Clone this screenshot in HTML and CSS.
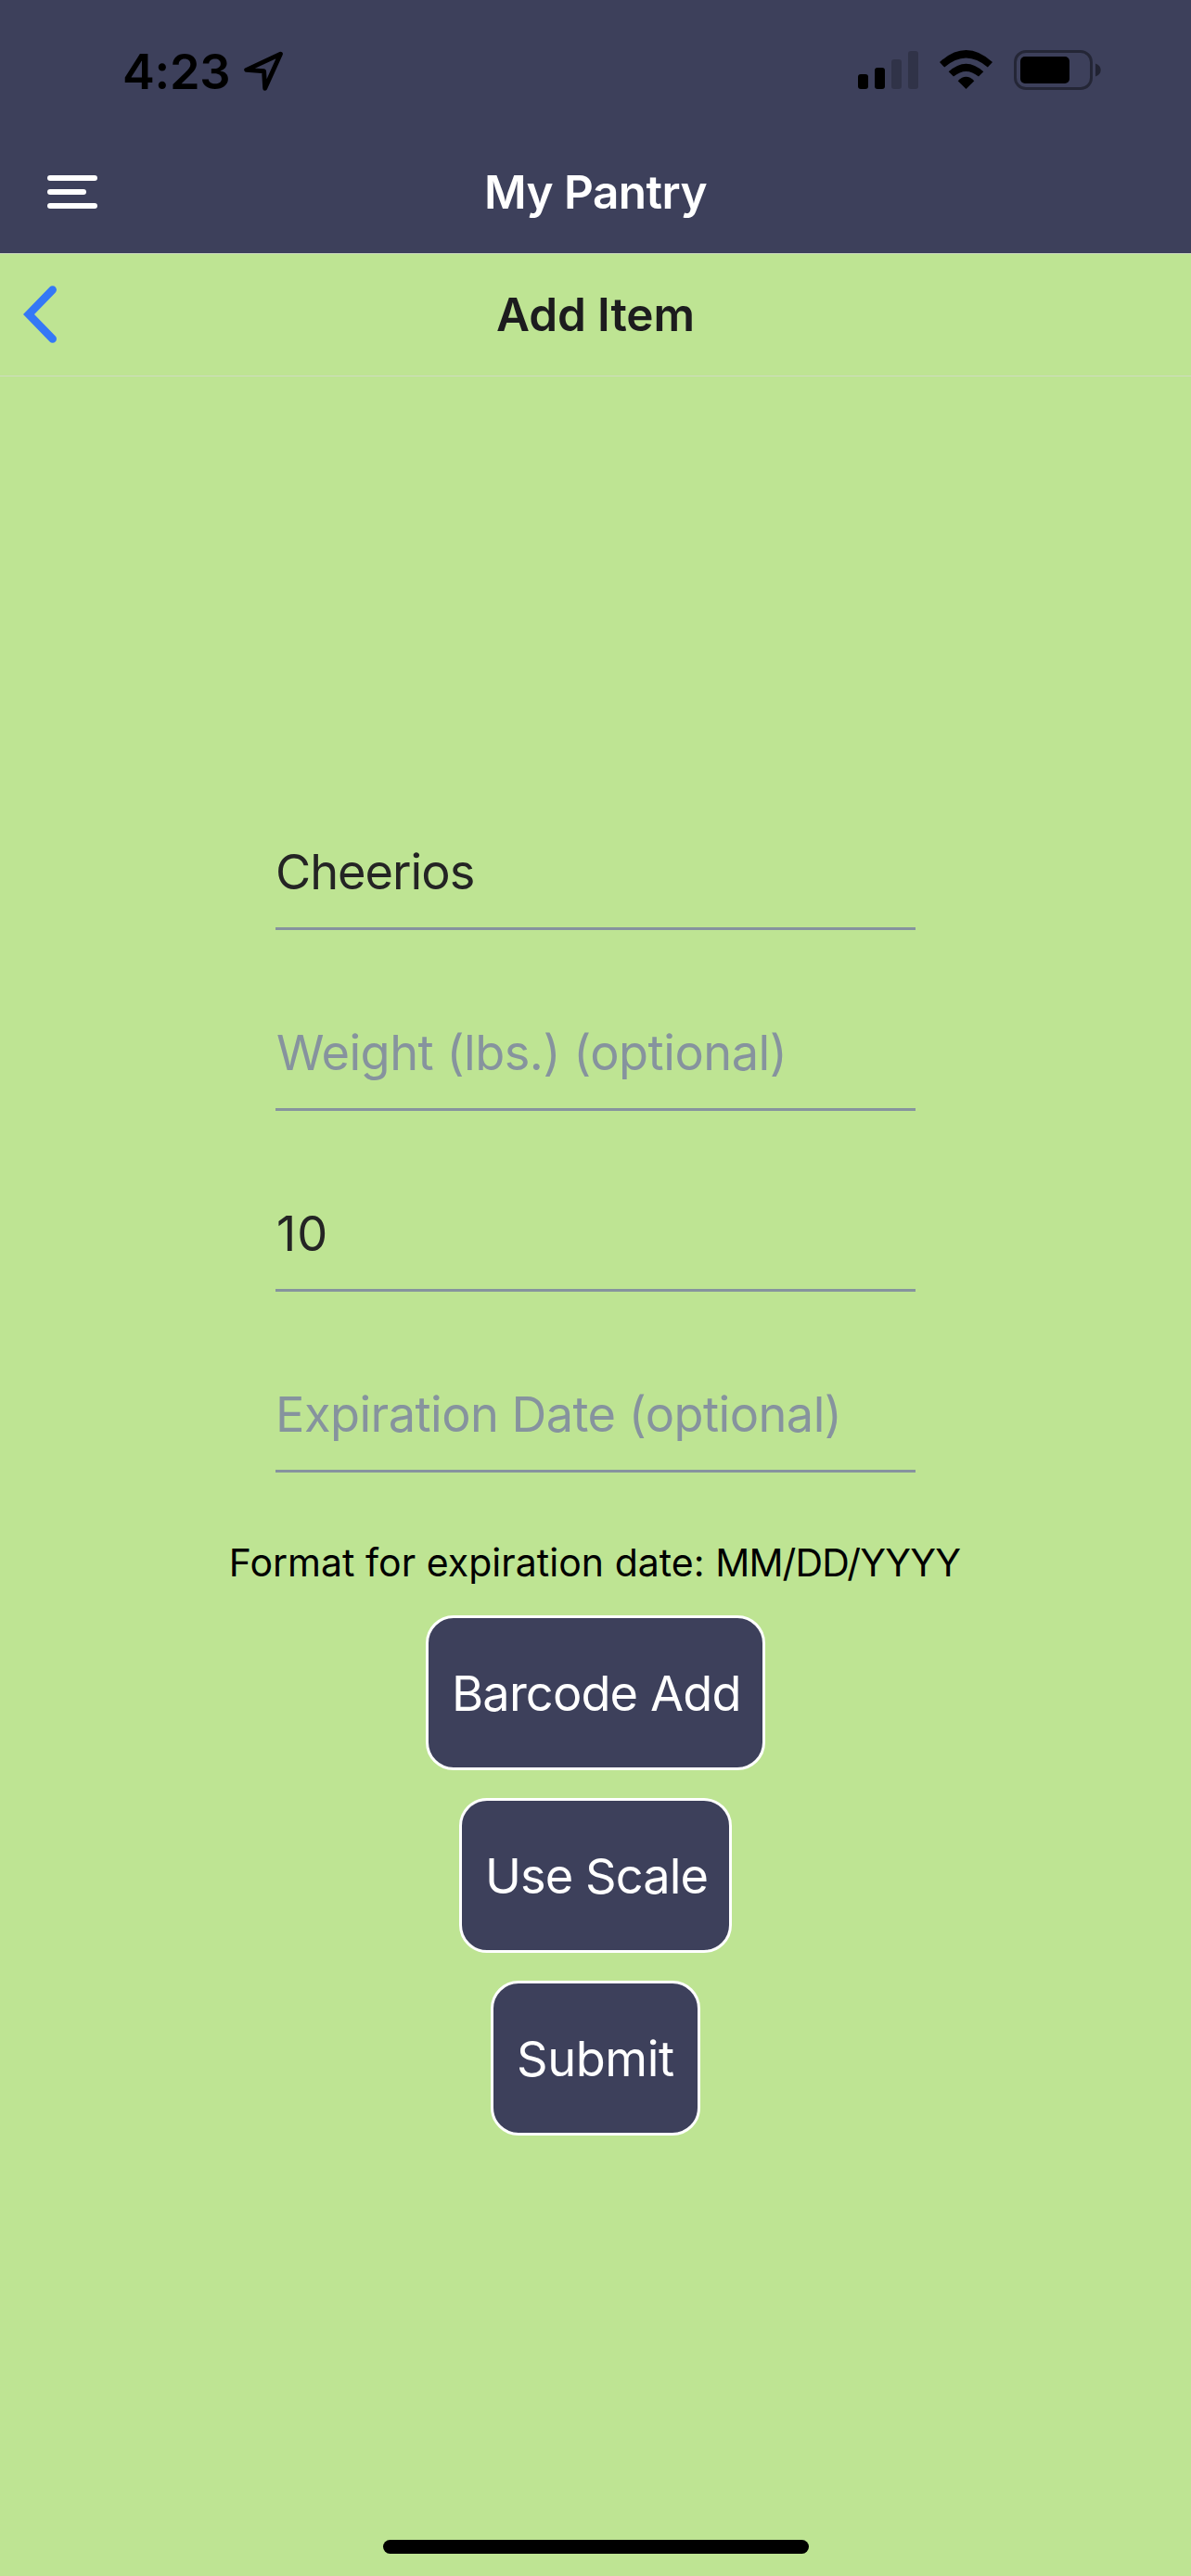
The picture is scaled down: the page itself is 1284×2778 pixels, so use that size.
FILE: index.html
```html
<!DOCTYPE html>
<html lang="en">
<head>
<meta charset="utf-8">
<title>My Pantry</title>
<link rel="stylesheet" href="styles.css">
</head>
<body>
<div class="screen">
  <header class="app-header">
    <div class="status-bar">
      <span class="time">4:23</span>
      <svg class="location" width="48" height="48" viewBox="260 52 48 48"><path d="M302.400 58.300 265.700 75.400 284.600 76.800 285.700 95.300Z" fill="none" stroke="#000" stroke-width="4.900" stroke-linejoin="round"/></svg>
      <svg class="indicators" width="264" height="46" viewBox="924 52 264 46">
        <rect x="925" y="80" width="11" height="16" rx="3"/>
        <rect x="943" y="73" width="11" height="23" rx="3"/>
        <g opacity=".2"><rect x="961" y="64" width="11" height="32" rx="3"/><rect x="979" y="55" width="11" height="41" rx="3"/></g>
        <path d="M1013 67Q1041.500 41 1070 67L1064.800 72.600Q1041.500 52.600 1018.200 72.600Z"/>
        <path d="M1022.700 77.300Q1041.500 60 1060.300 77.300L1055 82.600Q1041.500 71.300 1028 82.600Z"/>
        <path d="M1032.700 87.200Q1041.500 78.400 1050.300 87.200L1041.500 96Z"/>
        <rect x="1094.500" y="55.500" width="82" height="40" rx="11.500" fill="none" stroke="#000" stroke-opacity=".4" stroke-width="3"/>
        <rect x="1100" y="61" width="53" height="29" rx="5"/>
        <path d="M1181 68.500Q1186.700 70.500 1186.700 75.500Q1186.700 80.500 1181 82.500Z" opacity=".45"/>
      </svg>
    </div>
    <div class="title-bar">
      <svg class="menu" width="54" height="36" viewBox="0 0 54 36" fill="#fff"><rect width="54" height="6" rx="3"/><rect y="15" width="42" height="6" rx="3"/><rect y="30" width="54" height="6" rx="3"/></svg>
      <h1 class="title">My Pantry</h1>
    </div>
  </header>
  <nav class="nav-bar">
    <svg class="back" width="36" height="62" viewBox="25 308 36 62"><path d="M56.700 312.500 31 339 56.700 365.500" fill="none" stroke="#3478f6" stroke-width="8.600" stroke-linecap="round"/></svg>
    <h2 class="title">Add Item</h2>
  </nav>
  <main class="form">
    <div class="fields">
      <div class="field name">Cheerios</div>
      <div class="field placeholder weight">Weight (lbs.) (optional)</div>
      <div class="field quantity">10</div>
      <div class="field placeholder expiry">Expiration Date (optional)</div>
    </div>
    <p class="hint">Format for expiration date: <span class="pattern">MM/DD/YYYY</span></p>
    <div class="actions">
      <button class="button barcode">Barcode Add</button>
      <button class="button scale">Use Scale</button>
      <button class="button submit">Submit</button>
    </div>
  </main>
  <div class="home-indicator"></div>
</div>
</body>
</html>
```
FILE: styles.css
```css
* { box-sizing: border-box; }

body {
  margin: 0;
  background: #bee493;
  font-family: Inter, "Liberation Sans", sans-serif;
}

.screen {
  display: flex;
  flex-direction: column;
  width: 1284px;
  height: 2778px;
}

.app-header {
  height: 273px;
  background: #3d405b;
}

.status-bar {
  display: flex;
  height: 141px;
  padding: 0 96px 0 132px;
}

.time {
  width: 128px;
  padding-top: 45px;
  font-size: 52.3px;
  font-weight: 600;
  line-height: 64px;
  letter-spacing: -0.3px;
}

.location { margin-top: 52px; }

.indicators {
  margin: 52px 0 0 auto;
}

.title-bar,
.nav-bar {
  display: grid;
  grid-template-columns: 1fr auto 1fr;
  align-items: center;
  height: 132px;
}

.title {
  margin: 0;
  grid-column: 2;
  font-size: 49.5px;
  font-weight: 600;
  line-height: 60px;
}

.title-bar .title {
  color: #fff;
  letter-spacing: -0.55px;
}

.menu { margin-left: 51px; }

.nav-bar {
  height: 133px;
  padding-bottom: 1px;
  border-top: 1px solid #cfdcc0;
  border-bottom: 1px solid #cfdcc0;
}

.nav-bar .title {
  color: #1c1c1e;
  letter-spacing: -0.1px;
}

.back { margin-left: 25px; }

.form {
  display: flex;
  flex: 1;
  flex-direction: column;
  align-items: center;
  padding-top: 474px;
}

.fields {
  display: grid;
  gap: 72px;
  width: 690px;
}

.field {
  height: 123px;
  border-bottom: 3px solid #86939e;
  color: #242424;
  font-size: 52.3px;
  line-height: 120px;
  white-space: nowrap;
}

.placeholder { color: #86939e; }
.name { letter-spacing: -1px; }
.weight { padding-left: 1px; letter-spacing: -0.49px; }
.quantity { padding-left: 1px; letter-spacing: 1px; }
.expiry { letter-spacing: -0.54px; }

.hint {
  margin: 72px 2px 0 0;
  color: #000;
  font-size: 41px;
  line-height: 50px;
  letter-spacing: 0.03px;
}

.pattern { letter-spacing: -0.85px; }

.actions {
  display: flex;
  flex-direction: column;
  align-items: center;
  gap: 30px;
  margin-top: 32px;
}

.button {
  height: 167px;
  padding: 0 0 0 25px;
  border: 3px solid #fff;
  border-radius: 30px;
  background: #3d405b;
  color: #fff;
  font-family: inherit;
  font-size: 52.3px;
  line-height: 64px;
  text-align: left;
  white-space: nowrap;
}

.barcode { width: 366px; letter-spacing: -0.85px; }
.scale { width: 294px; letter-spacing: -0.9px; }
.submit { width: 226px; letter-spacing: -0.4px; }

.home-indicator {
  width: 459px;
  height: 15px;
  margin: 0 auto 24px;
  border-radius: 8px;
  background: #000;
}
```
